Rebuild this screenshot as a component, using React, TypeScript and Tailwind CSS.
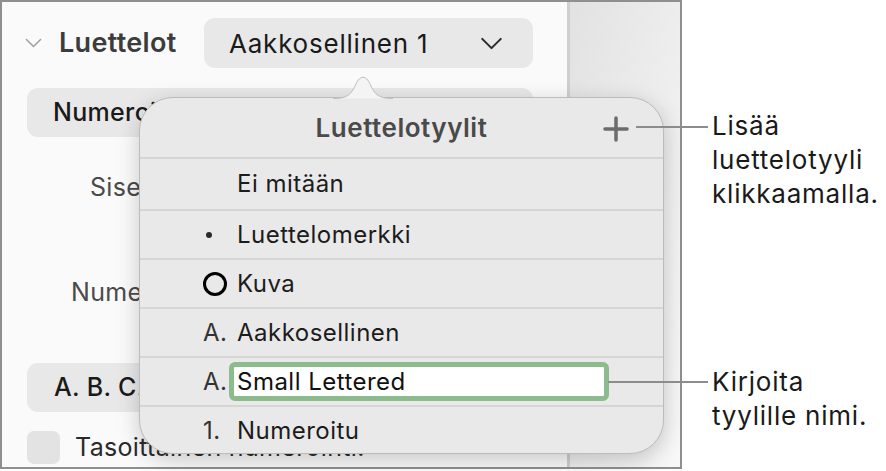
import { ReactNode } from "react";

type Row = {
  marker: ReactNode;
  label: string;
  height: string;
  editing?: boolean;
};

const Chevron = ({ className }: { className: string }) => (
  <svg viewBox="0 0 24 14" className={className} fill="none" stroke="currentColor" strokeWidth="2.2" strokeLinecap="round" strokeLinejoin="round">
    <path d="M2 2l10 10L22 2" />
  </svg>
);

const rows: Row[] = [
  { marker: null, label: "Ei mitään", height: "h-[52px]" },
  { marker: <span className="block w-[6px] h-[6px] rounded-full bg-[#2a2a2a] ml-[3px]" />, label: "Luettelomerkki", height: "h-[49px]" },
  { marker: <span className="block w-[24px] h-[24px] rounded-full border-[3px] border-black" />, label: "Kuva", height: "h-[49px]" },
  { marker: <span>A.</span>, label: "Aakkosellinen", height: "h-[49px]" },
  { marker: <span>A.</span>, label: "Small Lettered", height: "h-[49px]", editing: true },
  { marker: <span>1.</span>, label: "Numeroitu", height: "h-[49px]" },
];

const StylesPopover = () => (
  <div className="absolute left-[139px] top-[97px] w-[525px] h-[357px] rounded-[34px] bg-[#e9e9e9] border border-[#bcbcbc] shadow-[0_6px_22px_rgba(0,0,0,0.2)]">
    {/* arrow pointing to the dropdown */}
    <svg className="absolute left-[193px] top-[-25px] w-[60px] h-[26px]" viewBox="0 0 60 26">
      <path d="M0 25.5C14 25.5 18 22 23 11C27 2 33 2 37 11C42 22 46 25.5 60 25.5" fill="#f4f4f4" stroke="#bdbdbd" strokeWidth="1" />
    </svg>
    <div className="relative h-[59px] flex items-center justify-center">
      <span className="text-[26px] font-semibold tracking-[0.02em] text-[#4a4a4a]">Luettelotyylit</span>
      <svg className="absolute left-[463px] top-[18px] w-[26px] h-[26px]" viewBox="0 0 26 26" stroke="#6b6b6b" strokeWidth="3.5" strokeLinecap="round">
        <path d="M13 2v22M2 13h22" />
      </svg>
    </div>
    {rows.map((row) => (
      <div key={row.label} className={`${row.height} border-t-2 border-[#d5d5d5] flex items-center tracking-[0.03em]`}>
        <div className="w-[97px] pl-[63px] flex items-center text-[24px] text-[#333]">{row.marker}</div>
        {row.editing ? (
          <div className="ml-[-8px] w-[380px] h-[39px] rounded-[6px] border-[5px] border-[#8dbc8c] bg-white flex items-center pl-[3px] text-[24px] text-[#111]">
            {row.label}
          </div>
        ) : (
          <span className="text-[24px] text-[#1c1c1c]">{row.label}</span>
        )}
      </div>
    ))}
  </div>
);

export default function App() {
  return (
    <div className="relative w-[886px] h-[471px] bg-white flex font-['Inter',sans-serif] overflow-hidden">
      <div className="w-[682px] h-[469px] border-2 border-[#8f8f8f] flex overflow-hidden">
        <div className="w-[565px] h-full bg-[#fafafa] flex flex-col tracking-[0.02em]">
          <div className="mt-[16px] h-[50px] flex items-center">
            <div className="w-[57px] pl-[23px]">
              <Chevron className="w-[17px] h-[10px] text-[#a0a0a0]" />
            </div>
            <div className="w-[145px] text-[27px] font-semibold text-[#3c3c3c]">Luettelot</div>
            <div className="w-[329px] h-[50px] rounded-[11px] bg-[#e8e8e8] flex items-center justify-between pl-[25px] pr-[30px]">
              <span className="text-[26px] tracking-[0.03em] text-[#1a1a1a]">Aakkosellinen 1</span>
              <Chevron className="w-[23px] h-[13px] text-[#2a2a2a]" />
            </div>
          </div>
          <div className="mt-[20px] ml-[25px] w-[506px] h-[49px] rounded-[11px] bg-[#e8e8e8] flex items-center pl-[26px] text-[25px] font-medium text-[#1a1a1a]">
            Numerointi
          </div>
          <div className="mt-[37px] h-[26px] pl-[88px] text-[25px] text-[#4a4a4a] leading-[26px]">Sisennys</div>
          <div className="mt-[79px] h-[26px] pl-[69px] text-[25px] text-[#4a4a4a] leading-[26px]">Numerointi</div>
          <div className="mt-[58px] ml-[25px] w-[506px] h-[49px] rounded-[11px] bg-[#e8e8e8] flex items-center pl-[27px] text-[25px] font-medium text-[#1a1a1a]">
            A. B. C.
          </div>
          <div className="mt-[17px] ml-[25px] flex items-center gap-[15px]">
            <div className="w-[33px] h-[33px] rounded-[7px] bg-[#e3e3e3]" />
            <span className="text-[25px] text-[#2a2a2a]">Tasoittainen numerointi.</span>
          </div>
        </div>
        <div className="w-[3px] h-full bg-[#cfcfcf]" />
        <div className="flex-1 h-full bg-gradient-to-br from-[#e2e2e2] to-[#f8f8f8]" />
      </div>

      <div className="flex-1 flex flex-col pl-[30px] text-[26px] tracking-[0.03em] leading-[34px] text-[#1a1a1a]">
        <div className="mt-[109px]">
          Lisää
          <br />
          luettelotyyli
          <br />
          klikkaamalla.
        </div>
        <div className="mt-[154px]">
          Kirjoita
          <br />
          tyylille nimi.
        </div>
      </div>

      <StylesPopover />
      <div className="absolute left-[636px] top-[126px] w-[72px] h-[2px] bg-[#8c8c8c]" />
      <div className="absolute left-[608px] top-[381px] w-[100px] h-[2px] bg-[#8c8c8c]" />
    </div>
  );
}
